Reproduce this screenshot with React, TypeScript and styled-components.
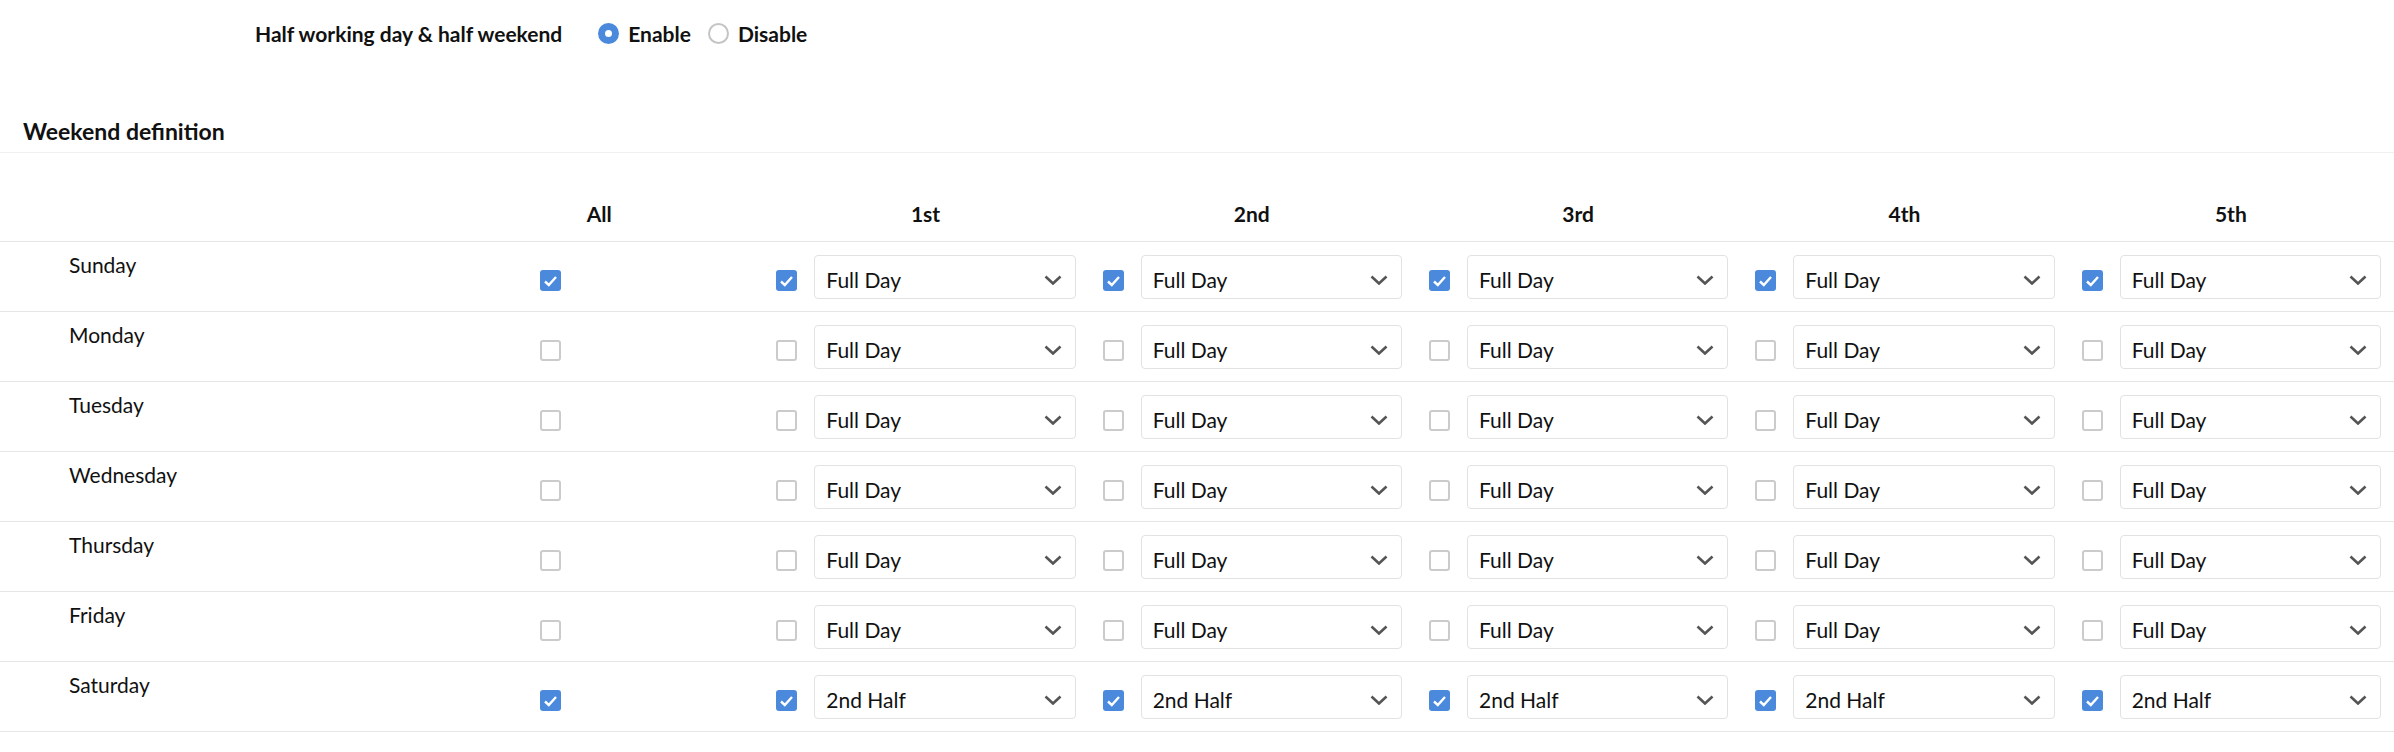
import * as React from 'react';
import styled, { createGlobalStyle } from 'styled-components';

const GlobalStyle = createGlobalStyle`
  html, body {
    margin: 0;
    padding: 0;
    background: #fff;
  }
  body {
    font-family: Lato, "Noto Sans", sans-serif;
    color: #111;
  }
`;

const blue = '#4a89dc';

const days = ['Sunday', 'Monday', 'Tuesday', 'Wednesday', 'Thursday', 'Friday', 'Saturday'];
const weeks = ['1st', '2nd', '3rd', '4th', '5th'];

const Page = styled.div`
  width: 100%;
`;

const SettingRow = styled.div`
  display: flex;
  align-items: center;
  padding: 21px 0 0 255px;
`;

const SettingLabel = styled.div`
  font-size: 21px;
  line-height: 25px;
  font-weight: 700;
  margin-right: 36px;
`;

const RadioGroup = styled.div`
  display: flex;
  align-items: center;
  gap: 17px;
`;

const RadioOption = styled.label`
  display: flex;
  align-items: center;
  gap: 9px;
  font-size: 21px;
  line-height: 25px;
  font-weight: 700;
`;

const RadioCircle = styled.span<{ $checked?: boolean }>`
  position: relative;
  width: 21px;
  height: 21px;
  border-radius: 50%;
  box-sizing: border-box;
  background: ${p => (p.$checked ? blue : '#fff')};
  border: ${p => (p.$checked ? 'none' : '2px solid #c4c4c4')};
  &::after {
    content: '';
    display: ${p => (p.$checked ? 'block' : 'none')};
    position: absolute;
    left: 7px;
    top: 7px;
    width: 7px;
    height: 7px;
    border-radius: 50%;
    background: #fff;
  }
`;

const SectionTitle = styled.div`
  margin-top: 72px;
  padding: 0 0 7px 23px;
  font-size: 23px;
  line-height: 27px;
  font-weight: 700;
  border-bottom: 1px solid #f0f0f0;
`;

const HeaderRow = styled.div`
  display: grid;
  grid-template-columns: 436px repeat(6, 1fr);
  align-items: end;
  height: 88px;
  border-bottom: 1px solid #e6e6e6;
`;

const HeadCell = styled.div`
  text-align: center;
  font-size: 21px;
  line-height: 25px;
  font-weight: 700;
  padding-bottom: 15px;
`;

const BodyRow = styled.div`
  display: grid;
  grid-template-columns: 436px repeat(6, 1fr);
  align-items: start;
  height: 69px;
  border-bottom: 1px solid #e6e6e6;
`;

const DayCell = styled.div`
  padding: 10px 0 0 69px;
  font-size: 21px;
  line-height: 25px;
  color: #111;
`;

const AllCell = styled.div`
  padding: 28px 0 0 104px;
`;

const WeekCell = styled.div`
  display: flex;
  align-items: flex-start;
  gap: 17px;
  padding: 13px 13px 0 14px;
`;

const Box = styled.span<{ $checked?: boolean; $offset?: number }>`
  flex: none;
  display: flex;
  align-items: center;
  justify-content: center;
  width: 21px;
  height: 21px;
  margin-top: ${p => p.$offset || 0}px;
  box-sizing: border-box;
  border-radius: 3px;
  background: ${p => (p.$checked ? blue : '#fff')};
  border: ${p => (p.$checked ? 'none' : '2px solid #cbcbcb')};
`;

const SelectBox = styled.div`
  flex: 1;
  display: flex;
  align-items: center;
  justify-content: space-between;
  height: 44px;
  box-sizing: border-box;
  padding: 5px 13px 0 11px;
  border: 1px solid #e2e2e2;
  border-radius: 4px;
  font-size: 21px;
  line-height: 25px;
  color: #111;
  background: #fff;
`;

const Chevron = () => (
  <svg width="18" height="10" viewBox="0 0 18 10">
    <polyline points="1.5,1.5 9,8.5 16.5,1.5" fill="none" stroke="#555" strokeWidth="2.6" />
  </svg>
);

const Check = ({ checked, offset }: { checked: boolean; offset?: number }) => (
  <Box $checked={checked} $offset={offset}>
    {checked && (
      <svg width="15" height="12" viewBox="0 0 15 12">
        <polyline points="2,6.5 5.8,10 13,2" fill="none" stroke="#fff" strokeWidth="2.4" />
      </svg>
    )}
  </Box>
);

export default function App() {
  return (
    <Page>
      <GlobalStyle />
      <SettingRow>
        <SettingLabel>Half working day &amp; half weekend</SettingLabel>
        <RadioGroup>
          <RadioOption>
            <RadioCircle $checked />
            Enable
          </RadioOption>
          <RadioOption>
            <RadioCircle />
            Disable
          </RadioOption>
        </RadioGroup>
      </SettingRow>

      <SectionTitle>Weekend definition</SectionTitle>

      <HeaderRow>
        <HeadCell />
        <HeadCell>All</HeadCell>
        {weeks.map(w => (
          <HeadCell key={w}>{w}</HeadCell>
        ))}
      </HeaderRow>

      {days.map(day => {
        const on = day === 'Sunday' || day === 'Saturday';
        const value = day === 'Saturday' ? '2nd Half' : 'Full Day';
        return (
          <BodyRow key={day}>
            <DayCell>{day}</DayCell>
            <AllCell>
              <Check checked={on} />
            </AllCell>
            {weeks.map(w => (
              <WeekCell key={w}>
                <Check checked={on} offset={15} />
                <SelectBox>
                  <span>{value}</span>
                  <Chevron />
                </SelectBox>
              </WeekCell>
            ))}
          </BodyRow>
        );
      })}
    </Page>
  );
}
